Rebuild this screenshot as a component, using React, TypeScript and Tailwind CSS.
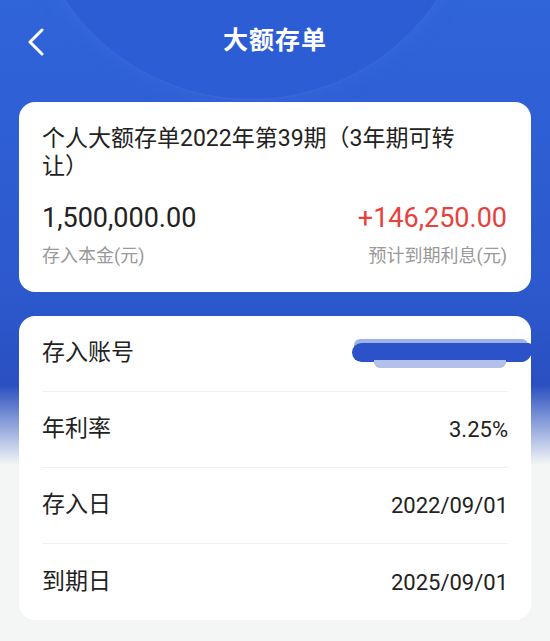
import * as React from "react";

const rows = [
  { label: "存入账号", value: "" },
  { label: "年利率", value: "3.25%" },
  { label: "存入日", value: "2022/09/01" },
  { label: "到期日", value: "2025/09/01" },
];

function BlurredAccount() {
  // smeared-out account number, drawn as soft blue bands
  return (
    <div className="relative w-[184px] h-[34px] -mr-[28px]">
      <div className="absolute left-[2px] right-[8px] top-[2px] h-[8px] rounded-t-md bg-[#9fb2e6]" />
      <div className="absolute left-0 right-[4px] top-[6px] h-[19px] rounded-l-[10px] rounded-br-[12px] rounded-tr-[4px] bg-[#2b52c8]" />
      <div className="absolute left-[22px] right-[30px] top-[23px] h-[8px] rounded-b-md bg-[#b3c1ea]" />
    </div>
  );
}

export default function App() {
  return (
    <div className="relative w-[550px] h-[641px] overflow-hidden bg-[#f4f6f6] font-['Roboto','Noto_Sans_CJK_SC',sans-serif]">
      {/* blue backdrop */}
      <div className="absolute inset-x-0 top-0 h-[465px] bg-[linear-gradient(180deg,#3064d9_0px,#2c58cc_300px,#2a4fc0_385px,#f4f6f6_465px)]" />
      <div className="absolute left-[27px] -top-[348px] w-[448px] h-[448px] rounded-full bg-[#2c5dd4] border border-[rgba(255,255,255,0.07)] shadow-[0_0_24px_rgba(90,140,245,0.18)]" />

      <div className="relative">
        {/* header */}
        <div className="relative h-[82px] flex items-center justify-center">
          <button className="absolute left-[26px] top-[27px] w-[20px] h-[30px] flex items-center justify-center">
            <svg width="18" height="28" viewBox="0 0 18 28" fill="none">
              <polyline
                points="15,2 3,14 15,26"
                stroke="white"
                strokeWidth="3"
                strokeLinecap="round"
                strokeLinejoin="round"
              />
            </svg>
          </button>
          <h1 className="text-white text-[25px] font-bold tracking-[1px]">大额存单</h1>
        </div>

        {/* summary card */}
        <div className="mx-[19px] mt-[20px] bg-white rounded-[16px] pl-[23px] pr-[24px] pt-[23px] pb-[24px]">
          <p className="w-[430px] text-[23px] leading-[28px] text-[#222]">
            个人大额存单2022年第39期（3年期可转让）
          </p>
          <div className="mt-[21px] flex justify-between items-center h-[32px]">
            <span className="text-[27px] text-[#222]">1,500,000.00</span>
            <span className="text-[27px] text-[#e8413b]">+146,250.00</span>
          </div>
          <div className="mt-[10px] flex justify-between text-[18px] leading-[24px] text-[#999]">
            <span>存入本金(元)</span>
            <span>预计到期利息(元)</span>
          </div>
        </div>

        {/* detail card */}
        <div className="mx-[19px] mt-[24px] bg-white rounded-[16px] px-[23px]">
          {rows.map((r, i) => (
            <div
              key={r.label}
              className={`h-[76px] flex items-center justify-between ${
                i < rows.length - 1 ? "border-b border-[#f0f0f0]" : ""
              }`}
            >
              <span className="text-[23px] text-[#222]">{r.label}</span>
              {r.value ? (
                <span className="text-[22px] text-[#222]">{r.value}</span>
              ) : (
                <BlurredAccount />
              )}
            </div>
          ))}
        </div>
      </div>
    </div>
  );
}
